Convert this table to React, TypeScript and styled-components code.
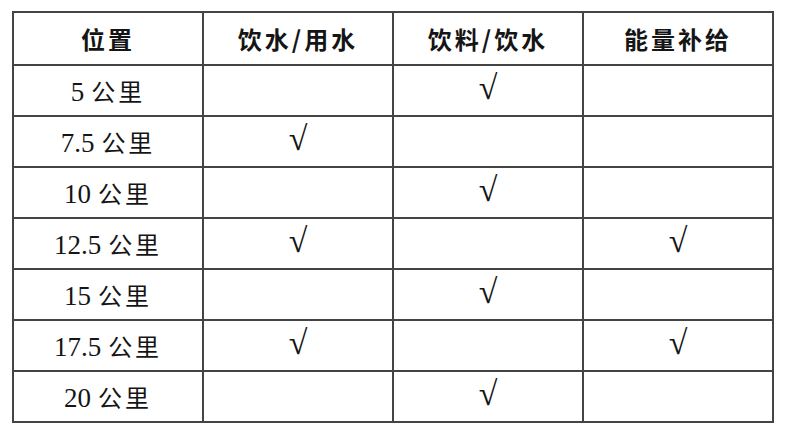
import styled, { createGlobalStyle } from "styled-components";

const GlobalStyle = createGlobalStyle`
  html, body {
    margin: 0;
    padding: 0;
    background: #ffffff;
  }
`;

const Page = styled.div`
  width: 800px;
  height: 445px;
  padding: 11px 0 0 12px;
  box-sizing: border-box;
  background: #ffffff;
`;

const Table = styled.table`
  width: 762px;
  border-collapse: collapse;
  table-layout: fixed;
  border: 2px solid #444;
  color: #151515;
`;

const HeadCell = styled.th`
  height: 51px;
  border: 2px solid #444;
  padding: 0;
  text-align: center;
  font-family: "Noto Sans CJK SC", sans-serif;
  font-weight: 700;
  font-size: 24px;
  letter-spacing: 3px;
`;

const Cell = styled.td`
  height: 49px;
  border: 2px solid #444;
  padding: 0;
  text-align: center;
  vertical-align: middle;
`;

const Num = styled.span`
  font-family: "Liberation Serif", serif;
  font-size: 27px;
  margin-right: 7px;
`;

const Unit = styled.span`
  font-family: "Noto Sans CJK SC", sans-serif;
  font-size: 24px;
  letter-spacing: 3px;
`;

const Check = styled.span`
  display: inline-block;
  font-family: "Liberation Serif", serif;
  font-size: 34px;
  line-height: 1;
  transform: translateY(-3px);
`;

interface Row {
  km: string;
  water: boolean;
  drink: boolean;
  energy: boolean;
}

const rows: Row[] = [
  { km: "5", water: false, drink: true, energy: false },
  { km: "7.5", water: true, drink: false, energy: false },
  { km: "10", water: false, drink: true, energy: false },
  { km: "12.5", water: true, drink: false, energy: true },
  { km: "15", water: false, drink: true, energy: false },
  { km: "17.5", water: true, drink: false, energy: true },
  { km: "20", water: false, drink: true, energy: false },
];

const mark = (on: boolean) => (on ? <Check>√</Check> : null);

const App = () => {
  return (
    <Page>
      <GlobalStyle />
      <Table>
        <thead>
          <tr>
            <HeadCell>位置</HeadCell>
            <HeadCell>饮水/用水</HeadCell>
            <HeadCell>饮料/饮水</HeadCell>
            <HeadCell>能量补给</HeadCell>
          </tr>
        </thead>
        <tbody>
          {rows.map((r) => (
            <tr key={r.km}>
              <Cell>
                <Num>{r.km}</Num>
                <Unit>公里</Unit>
              </Cell>
              <Cell>{mark(r.water)}</Cell>
              <Cell>{mark(r.drink)}</Cell>
              <Cell>{mark(r.energy)}</Cell>
            </tr>
          ))}
        </tbody>
      </Table>
    </Page>
  );
};

export default App;
